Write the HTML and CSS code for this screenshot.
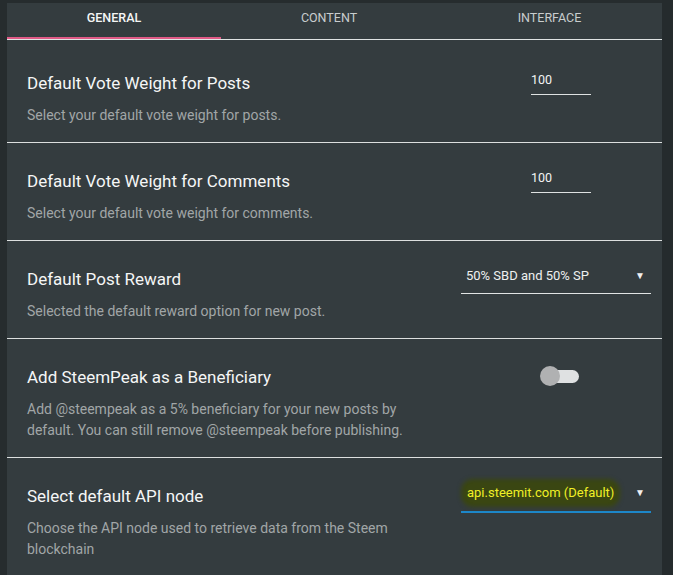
FILE: index.html
```html
<!DOCTYPE html>
<html>
<head>
<meta charset="utf-8">
<link rel="stylesheet" href="styles.css">
</head>
<body>
<div class="page">
  <div class="panel">
    <div class="tabs">
      <div class="tab tab-general active">General</div>
      <div class="tab tab-content">Content</div>
      <div class="tab tab-interface">Interface</div>
    </div>
    <div class="list">
      <div class="row first">
        <div class="text">
          <div class="title">Default Vote Weight for Posts</div>
          <div class="desc">Select your default vote weight for posts.</div>
        </div>
        <div class="control">
          <div class="num">100</div>
        </div>
      </div>
      <div class="row">
        <div class="text">
          <div class="title">Default Vote Weight for Comments</div>
          <div class="desc">Select your default vote weight for comments.</div>
        </div>
        <div class="control">
          <div class="num">100</div>
        </div>
      </div>
      <div class="row">
        <div class="text">
          <div class="title">Default Post Reward</div>
          <div class="desc">Selected the default reward option for new post.</div>
        </div>
        <div class="control">
          <div class="select"><span class="val">50% SBD and 50% SP</span><span class="arrow">▼</span></div>
        </div>
      </div>
      <div class="row">
        <div class="text">
          <div class="title">Add SteemPeak as a Beneficiary</div>
          <div class="desc">Add @steempeak as a 5% beneficiary for your new posts by default. You can still remove @steempeak before publishing.</div>
        </div>
        <div class="control">
          <div class="toggle"><span class="track"></span><span class="thumb"></span></div>
        </div>
      </div>
      <div class="row last">
        <div class="text">
          <div class="title">Select default API node</div>
          <div class="desc">Choose the API node used to retrieve data from the Steem blockchain</div>
        </div>
        <div class="control">
          <div class="select focus"><span class="val hl">api.steemit.com (Default)</span><span class="arrow">▼</span></div>
        </div>
      </div>
    </div>
  </div>
  <div class="scroll"></div>
</div>
</body>
</html>
```
FILE: styles.css
```css
html, body {
  margin: 0;
  padding: 0;
  background: #262c2e;
  font-family: Roboto, "Liberation Sans", sans-serif;
}
.page {
  display: flex;
  width: 673px;
  height: 575px;
  overflow: hidden;
}
.panel {
  margin-left: 7px;
  margin-top: 3px;
  width: 655px;
  background: #343c3f;
  flex: none;
}
.scroll {
  flex: 1;
  background: #252b2d;
}
.tabs {
  display: flex;
  border-bottom: 1px solid #dfe3e3;
  height: 36px;
}
.tab {
  text-align: center;
  text-transform: uppercase;
  font-size: 12.5px;
  color: #c9cdce;
  line-height: 29px;
  box-sizing: border-box;
}
.tab-general { width: 214px; }
.tab-content { width: 216px; }
.tab-interface { flex: 1; }
.tab.active {
  color: #f4f6f6;
  border-bottom: 2px solid #e05a86;
  font-weight: 500;
}
.list {
  padding-top: 5px;
}
.row {
  display: flex;
  align-items: flex-start;
  padding: 26px 10px 16px 20px;
  border-bottom: 1px solid #dcdfdf;
}
.row.last {
  border-bottom: none;
}
.text {
  width: 390px;
  flex: none;
}
.title {
  font-size: 17px;
  line-height: 24px;
  color: #f5f6f6;
}
.desc {
  margin-top: 10px;
  font-size: 14px;
  line-height: 21px;
  color: #a1a6a7;
}
.control {
  flex: 1;
  position: relative;
}
.num {
  margin-left: 114px;
  margin-top: 0;
  width: 60px;
  font-size: 12.5px;
  color: #f2f4f4;
  line-height: 18px;
  padding-bottom: 5px;
  border-bottom: 1px solid #dfe2e2;
}
.select {
  margin-left: 44px;
  margin-top: -1px;
  width: 190px;
  display: flex;
  justify-content: space-between;
  align-items: center;
  font-size: 13px;
  color: #eef0f0;
  line-height: 20px;
  padding: 0 6px 7px 5px;
  box-sizing: border-box;
  border-bottom: 1px solid #e1e4e4;
}
.select.focus {
  border-bottom: 2px solid #1d87c9;
  padding-bottom: 8px;
  margin-top: -1px;
}
.arrow {
  font-size: 10px;
  color: #f0f0f0;
}
.hl {
  color: #f0f026;
  font-size: 13px;
  background: #3a4612;
  border-radius: 8px;
  box-shadow: 0 0 4px 4px #3a4612;
  margin-left: -1px;
  padding: 0 2px;
}
.toggle {
  position: relative;
  margin-left: 123px;
  margin-top: 2px;
  width: 40px;
  height: 20px;
}
.track {
  position: absolute;
  left: 5px;
  top: 3px;
  width: 34px;
  height: 13px;
  border-radius: 7px;
  background: #dfe1e2;
}
.thumb {
  position: absolute;
  left: 0;
  top: -1px;
  width: 20px;
  height: 20px;
  border-radius: 50%;
  background: #b0b1b2;
}
```
